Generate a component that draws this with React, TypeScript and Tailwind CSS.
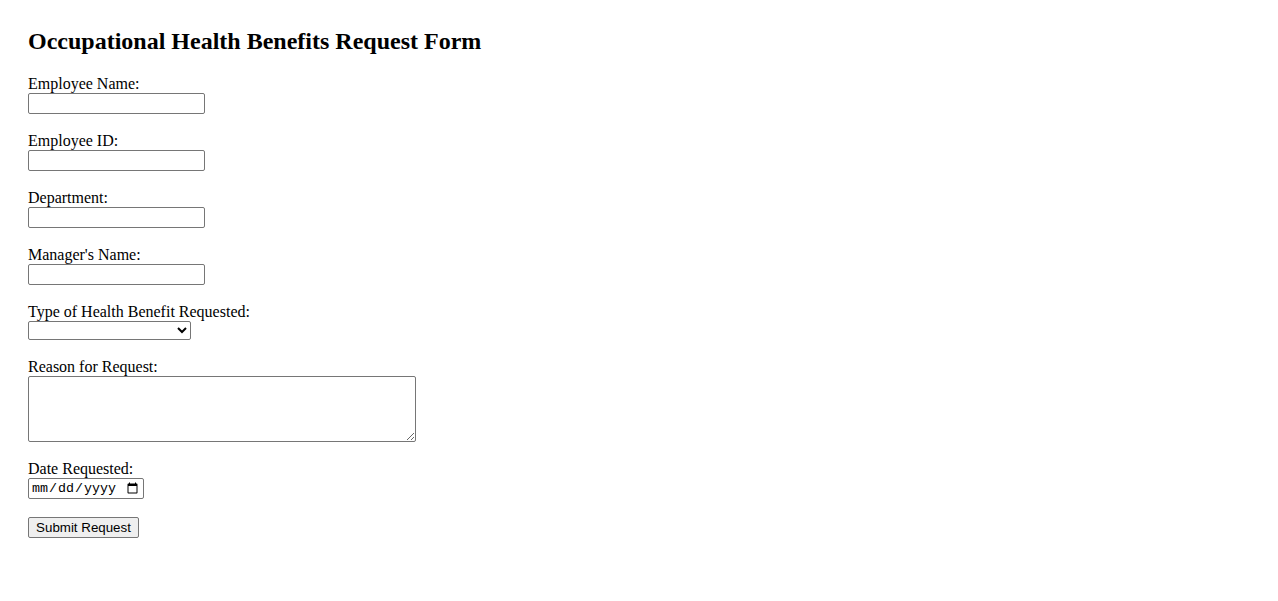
import React from "react";

const inputCls =
  "block w-[177px] h-[21px] border border-[#767676] rounded-[2px] bg-white px-[2px] py-[1px] text-[13.333px] [font-family:'Liberation_Sans',Arial,sans-serif]";

export default function App() {
  return (
    <div className="min-h-[601px] bg-white text-black px-[28px] pt-[27px] [font-family:'Liberation_Serif','Times_New_Roman',serif] text-[16px] leading-[18px]">
      <h2 className="text-[24px] font-bold leading-[28px] mb-[20px]">
        Occupational Health Benefits Request Form
      </h2>
      <form className="flex flex-col gap-[18px]" onSubmit={(e) => e.preventDefault()}>
        <div>
          <label className="block h-[18px]">Employee Name:</label>
          <input type="text" className={inputCls} />
        </div>
        <div>
          <label className="block h-[18px]">Employee ID:</label>
          <input type="text" className={inputCls} />
        </div>
        <div>
          <label className="block h-[18px]">Department:</label>
          <input type="text" className={inputCls} />
        </div>
        <div>
          <label className="block h-[18px]">Manager's Name:</label>
          <input type="text" className={inputCls} />
        </div>
        <div>
          <label className="block h-[18px]">Type of Health Benefit Requested:</label>
          <select className="block w-[163px] h-[19px] border border-[#767676] rounded-[2px] bg-white text-[13.333px] [font-family:'Liberation_Sans',Arial,sans-serif]">
            <option></option>
          </select>
        </div>
        <div>
          <label className="block h-[18px]">Reason for Request:</label>
          <textarea className="block w-[388px] h-[66px] border border-[#767676] rounded-[2px] bg-white p-[2px] text-[13.333px] [font-family:'Liberation_Mono',monospace]" />
        </div>
        <div>
          <label className="block h-[18px]">Date Requested:</label>
          <input
            type="date"
            className="block w-[116px] h-[21px] border border-[#767676] rounded-[2px] bg-white px-[2px] py-[1px] text-[13.333px] [font-family:'Liberation_Mono',monospace]"
          />
        </div>
        <div>
          <button
            type="submit"
            className="block h-[21px] w-[111px] border border-[#767676] rounded-[2px] bg-[#efefef] px-[6px] text-[13.333px] leading-[17px] [font-family:'Liberation_Sans',Arial,sans-serif]"
          >
            Submit Request
          </button>
        </div>
      </form>
    </div>
  );
}
